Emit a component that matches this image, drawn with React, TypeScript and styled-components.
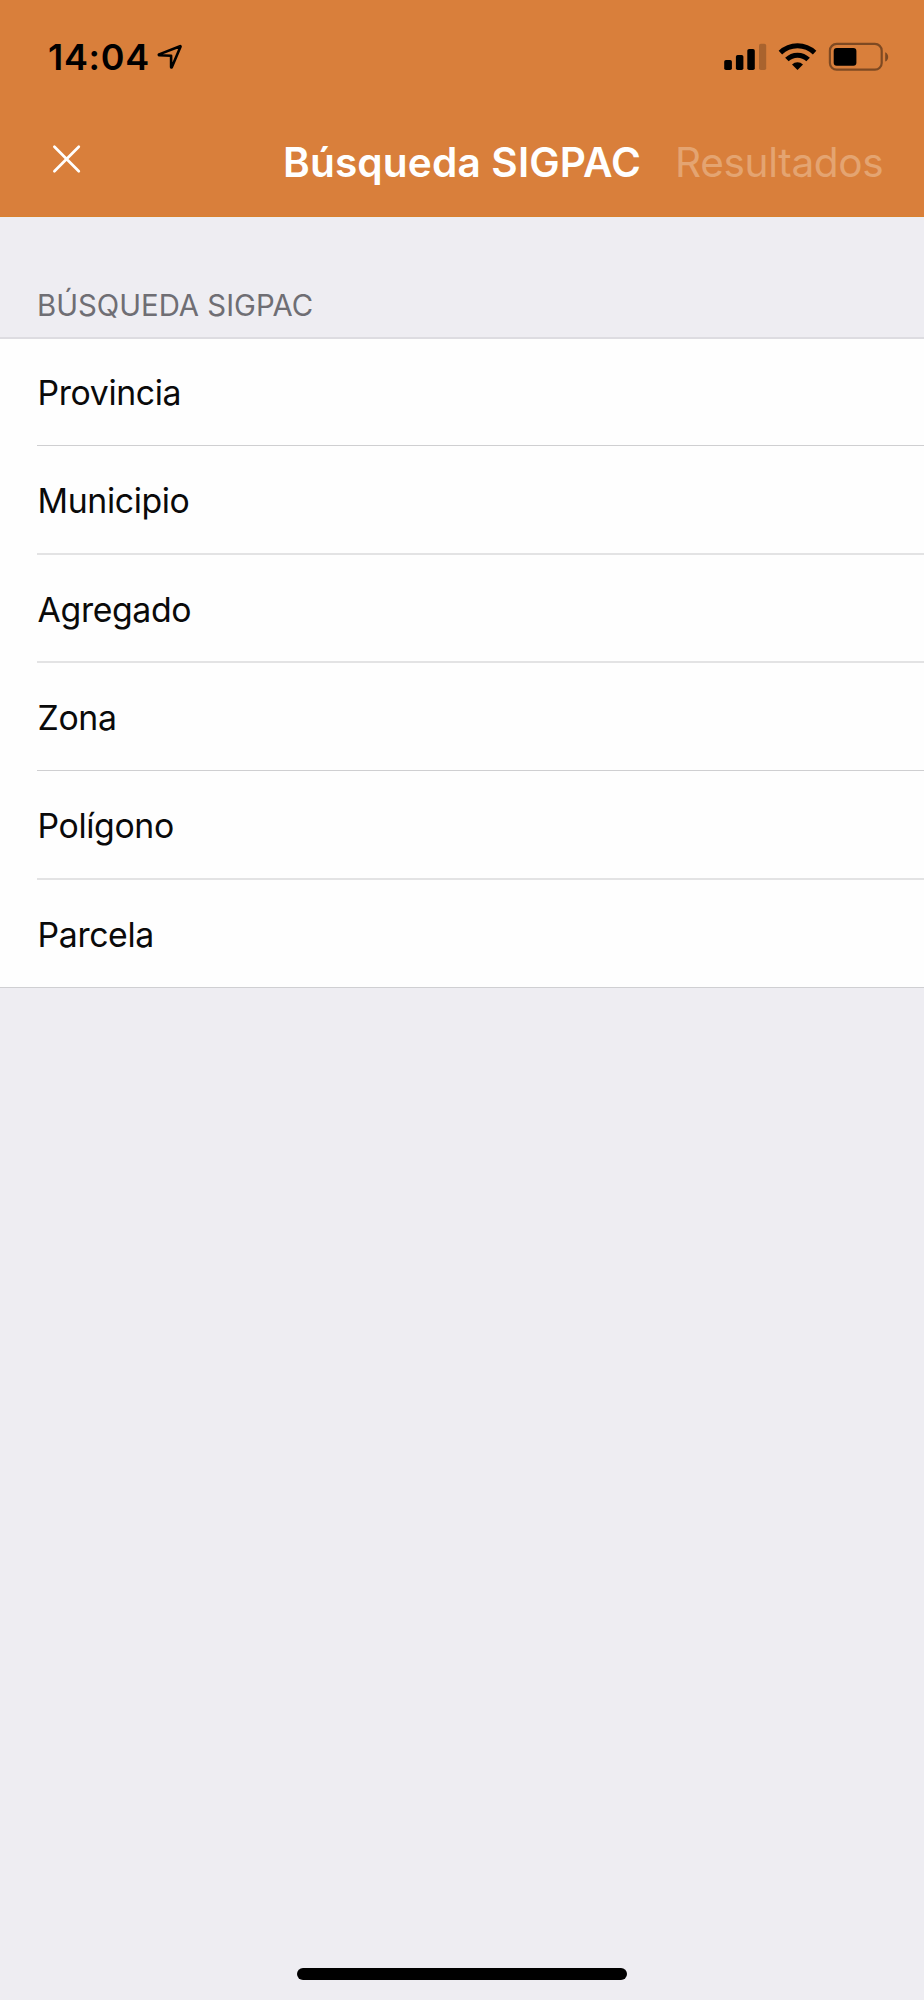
import React from "react";
import styled, { createGlobalStyle } from "styled-components";

const GlobalStyle = createGlobalStyle`
  *, *::before, *::after { box-sizing: border-box; }
  html, body { margin: 0; padding: 0; background: #eeedf2; }
  body { font-family: Inter, "Liberation Sans", sans-serif; -webkit-font-smoothing: antialiased; }
`;

const Screen = styled.div`
  width: 924px;
  height: 2000px;
  display: flex;
  flex-direction: column;
  background: #eeedf2;
  overflow: hidden;
`;

const Header = styled.header`
  height: 217px;
  background: #d97f3b;
  border-bottom: 1px solid #d9822f;
`;

const StatusBar = styled.div`
  height: 108px;
  padding: 31px 34px 0 48px;
  display: flex;
  justify-content: space-between;
  align-items: flex-start;
`;

const StatusGroup = styled.div`
  display: flex;
  align-items: center;
  height: 52px;
`;

const Time = styled.span`
  width: 109px;
  font-size: 36px;
  font-weight: 600;
  line-height: 52px;
  letter-spacing: 0.7px;
  color: #000;
  white-space: nowrap;
`;

const NavBar = styled.nav`
  height: 108px;
  display: grid;
  grid-template-columns: 283px 359px 1fr;
  align-items: center;
`;

const CloseButton = styled.button`
  width: 34px;
  height: 34px;
  margin: 0 0 7px 50px;
  padding: 0;
  border: 0;
  background: none;
  svg { display: block; }
`;

const Title = styled.h1`
  margin: 0;
  padding-top: 2px;
  font-size: 40.6px;
  line-height: 106px;
  font-weight: 600;
  letter-spacing: 0.16px;
  color: #fff;
  white-space: nowrap;
`;

const ResultsButton = styled.button`
  padding: 2px 0 0 33px;
  border: 0;
  background: none;
  font: 400 40.6px/106px Inter, "Liberation Sans", sans-serif;
  letter-spacing: -0.35px;
  text-align: left;
  color: #e4a471;
  white-space: nowrap;
`;

const SectionTitle = styled.h2`
  height: 120px;
  margin: 0;
  padding: 68px 0 0 37px;
  font-size: 29.3px;
  line-height: 42px;
  font-weight: 400;
  letter-spacing: 0.02px;
  color: #6f6e74;
  white-space: nowrap;
`;

const List = styled.ul`
  margin: 0;
  padding: 0;
  list-style: none;
  background: #fefefe;
  border-top: 2px solid #dddce1;
  border-bottom: 1px solid #cfcfd2;
`;

const Row = styled.li<{ $height: number; $line: "thin" | "soft" | "none" }>`
  height: ${(p) => p.$height}px;
  margin-left: 37px;
  padding-left: 0.6px;
  display: flex;
  align-items: flex-start;
  border-bottom: ${(p) =>
    p.$line === "thin" ? "1px solid #cfcfd1" : p.$line === "soft" ? "2px solid #e3e3e4" : "0"};
`;

const Label = styled.span<{ $lineHeight: number }>`
  font-size: 33.8px;
  line-height: ${(p) => p.$lineHeight}px;
  letter-spacing: -0.38px;
  color: #0a0a0a;
  white-space: nowrap;
`;

const Footer = styled.footer`
  margin-top: auto;
  padding-bottom: 20px;
  display: flex;
  justify-content: center;
`;

const HomeIndicator = styled.div`
  width: 330px;
  height: 12px;
  border-radius: 6px;
  background: #000;
`;

const rows = [
  { label: "Provincia", height: 107, lineHeight: 108, line: "thin" },
  { label: "Municipio", height: 109, lineHeight: 110, line: "soft" },
  { label: "Agregado", height: 108, lineHeight: 109, line: "soft" },
  { label: "Zona", height: 108, lineHeight: 110, line: "thin" },
  { label: "Polígono", height: 109, lineHeight: 110, line: "soft" },
  { label: "Parcela", height: 107, lineHeight: 109, line: "none" },
] as const;

const LocationIcon = () => (
  <svg width="26" height="26" viewBox="157 44 26 26" fill="none">
    <path
      d="M159.1 54.4 180 46.2Q180.8 46 180.5 46.8L171.8 67.2Q171.2 68 171.1 67V55.7L159.2 55.3Q158.4 54.9 159.1 54.4Z"
      stroke="#000"
      strokeWidth="2.6"
      strokeLinejoin="round"
    />
  </svg>
);

const SystemIcons = () => (
  <svg width="168" height="30" viewBox="722 42 168 30">
    <rect x="724.2" y="60" width="7.7" height="10" rx="1.8" />
    <rect x="735.9" y="55" width="7.5" height="15" rx="1.8" />
    <rect x="747.3" y="49" width="7.5" height="21" rx="1.8" />
    <rect x="759" y="43.7" width="7.2" height="26.3" rx="1.8" opacity="0.22" />
    <g fill="none" stroke="#000" strokeWidth="5">
      <path d="M780.4 52.6a24.6 24.6 0 0 1 34.2 0" />
      <path d="M786.9 59.6a15 15 0 0 1 21.2 0" />
    </g>
    <path d="M797.5 70 792 64.4a8.1 8.1 0 0 1 11 0Z" />
    <rect x="829.9" y="43.9" width="51.8" height="25.8" rx="6.8" fill="none" stroke="#000" strokeWidth="2.2" opacity="0.42" />
    <rect x="833.7" y="48" width="22.7" height="17.7" rx="3" />
    <path d="M885.2 52.2a5.2 5.2 0 0 1 0 9.4Z" opacity="0.42" />
  </svg>
);

export default function App() {
  return (
    <>
      <GlobalStyle />
      <Screen>
        <Header>
          <StatusBar>
            <StatusGroup>
              <Time>14:04</Time>
              <LocationIcon />
            </StatusGroup>
            <StatusGroup>
              <SystemIcons />
            </StatusGroup>
          </StatusBar>
          <NavBar>
            <CloseButton aria-label="Cerrar">
              <svg width="34" height="34" viewBox="50 141.5 34 34" stroke="#fff" strokeWidth="2.7" strokeLinecap="round">
                <path d="M54.4 146.3 78.8 170.7M78.8 146.3 54.4 170.7" />
              </svg>
            </CloseButton>
            <Title>Búsqueda SIGPAC</Title>
            <ResultsButton disabled>Resultados</ResultsButton>
          </NavBar>
        </Header>
        <SectionTitle>BÚSQUEDA SIGPAC</SectionTitle>
        <List>
          {rows.map((r) => (
            <Row key={r.label} $height={r.height} $line={r.line}>
              <Label $lineHeight={r.lineHeight}>{r.label}</Label>
            </Row>
          ))}
        </List>
        <Footer>
          <HomeIndicator />
        </Footer>
      </Screen>
    </>
  );
}
